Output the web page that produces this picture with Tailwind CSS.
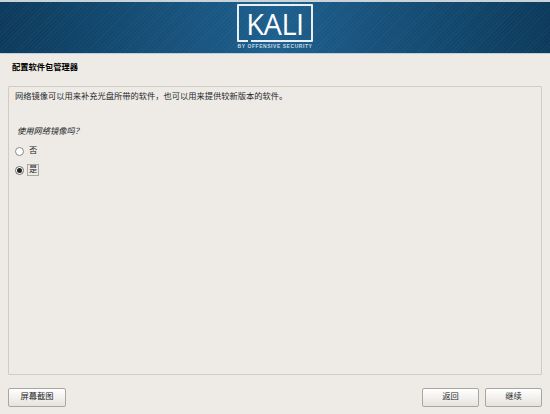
<!DOCTYPE html>
<html lang="zh">
<head>
    <meta charset="UTF-8">
    <title>配置软件包管理器</title>
    <script src="https://cdn.jsdelivr.net/npm/@tailwindcss/browser@4"></script>
</head>
<body class="bg-[#eeebe6] font-['Liberation_Sans','Noto_Sans_CJK_SC',sans-serif] text-[#24282a]">
    <div class="w-[550px] h-[414px] flex flex-col overflow-hidden">
        <!-- Banner -->
        <header class="h-[54px] shrink-0 border-t-2 border-t-[#c9d3da] border-b border-b-[#b9d0dd] bg-[repeating-linear-gradient(135deg,#ffffff08_0px,#ffffff08_1px,transparent_1px,transparent_3px),linear-gradient(to_right,#0c3a5c,#1d5f8d,#0c3a5c)] flex flex-col items-center">
            <div class="w-[76px] h-[38px] mt-[2px] relative border-2 border-white/90 rounded-[1px] flex items-center justify-center text-white text-[29px] leading-none tracking-[-0.5px] font-['Open_Sans',sans-serif]">
                KALI
                <span class="absolute -bottom-[2px] left-[9px] w-[3px] h-[2px] bg-[#1d5f8d]"></span>
            </div>
            <div class="text-[5px] leading-[7px] mt-[1px] tracking-[0.55px] font-bold text-[#c4d9e6]">BY OFFENSIVE SECURITY</div>
        </header>

        <main class="flex-1 flex flex-col px-2 min-h-0">
            <h1 class="text-[8.25px] font-bold text-black leading-[10px] mt-[9px] ml-[4px]">配置软件包管理器</h1>

            <section class="mt-[13px] h-[289px] border border-[#cfccc4] rounded-[1px] px-[6px] text-[8.25px] leading-[10px]">
                <p class="mt-[5px]">网络镜像可以用来补充光盘所带的软件，也可以用来提供较新版本的软件。</p>
                <p class="mt-[25px] ml-[2px] italic">使用网络镜像吗？</p>
                <div class="mt-[8px] flex items-center h-[12px]">
                    <span class="w-[9px] h-[9px] rounded-full border border-[#8b8b85] bg-white"></span>
                    <span class="ml-[4px] px-[1px]">否</span>
                </div>
                <div class="mt-[6px] flex items-center h-[14px]">
                    <span class="w-[9px] h-[9px] rounded-full border border-[#6b6b66] bg-white flex items-center justify-center">
                        <span class="w-[5px] h-[5px] rounded-full bg-[#222]"></span>
                    </span>
                    <span class="ml-[3px] px-[1px] border border-[#a9a79f]">是</span>
                </div>
            </section>

            <footer class="mt-[13px] flex justify-between">
                <button class="w-[58px] h-[19px] text-[8.25px] border border-[#a8a69f] rounded-[2px] bg-gradient-to-b from-white to-[#e6e3de]">屏幕截图</button>
                <div class="flex gap-[6px]">
                    <button class="w-[57px] h-[19px] text-[8.25px] border border-[#a8a69f] rounded-[2px] bg-gradient-to-b from-white to-[#e6e3de]">返回</button>
                    <button class="w-[57px] h-[19px] text-[8.25px] border border-[#a8a69f] rounded-[2px] bg-gradient-to-b from-white to-[#e6e3de]">继续</button>
                </div>
            </footer>
        </main>
    </div>
</body>
</html>
